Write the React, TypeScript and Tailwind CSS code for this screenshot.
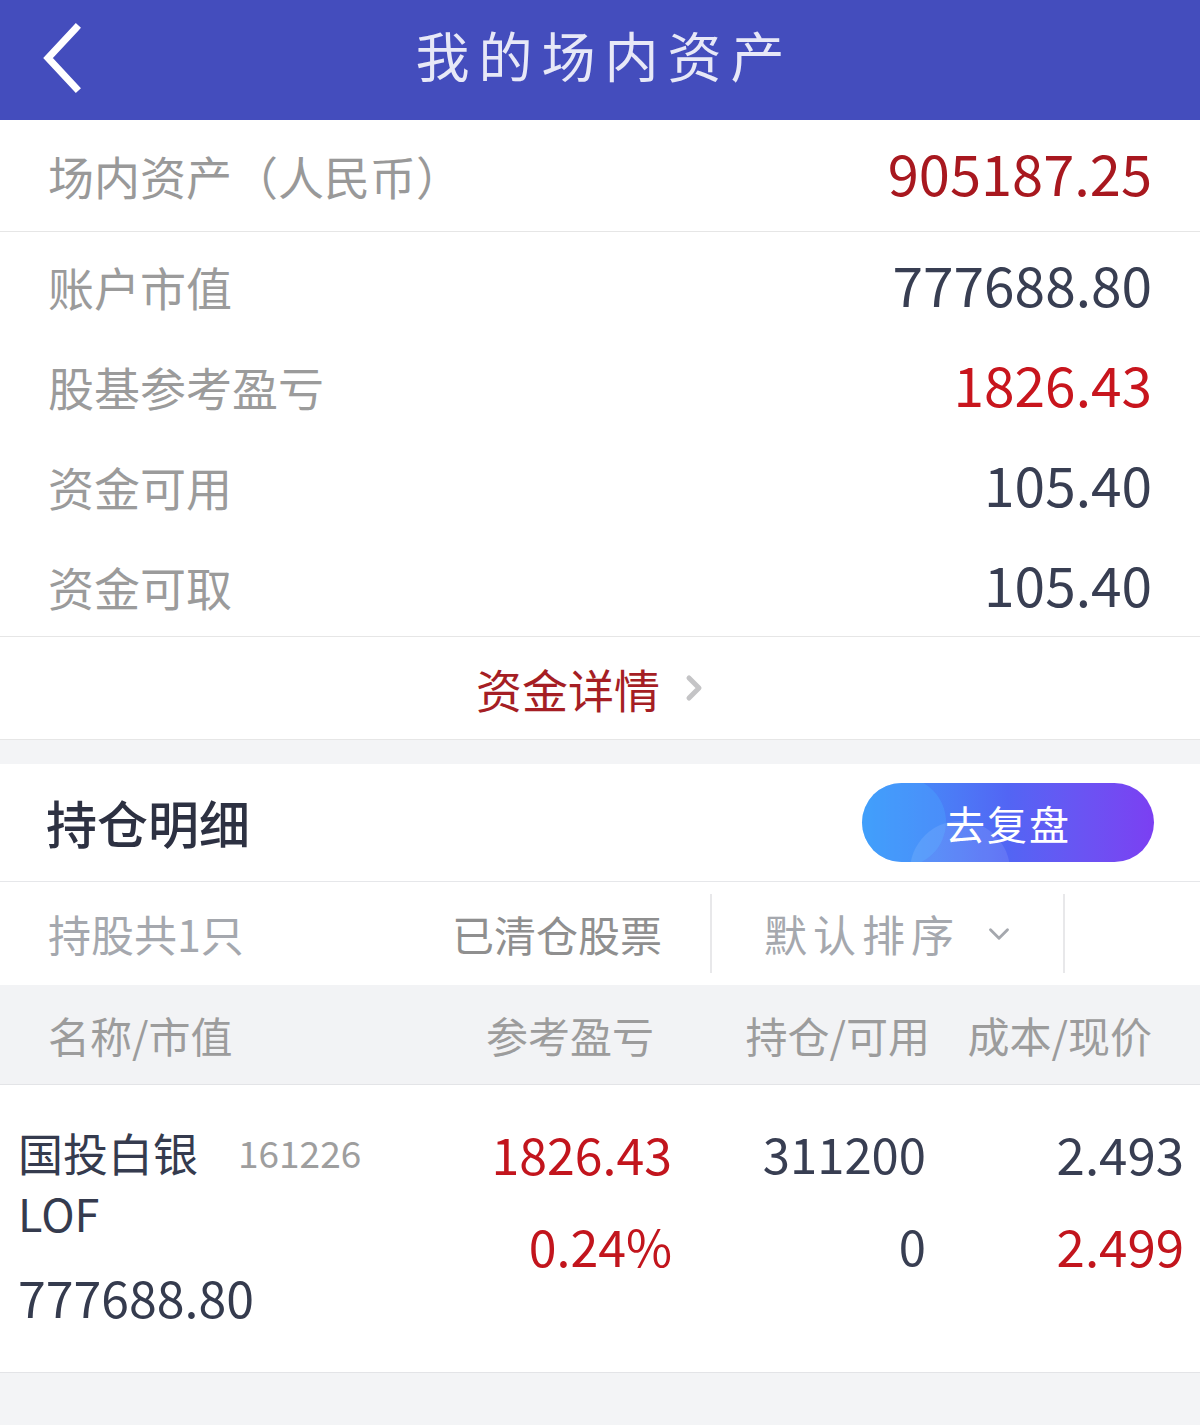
import { ChevronDown, ChevronRight } from 'lucide-react';

const font = "font-['Noto_Sans_CJK_SC','Noto_Sans',sans-serif]";

const summaryRows = [
  { label: '账户市值', value: '777688.80', red: false },
  { label: '股基参考盈亏', value: '1826.43', red: true },
  { label: '资金可用', value: '105.40', red: false },
  { label: '资金可取', value: '105.40', red: false },
];

export default function App() {
  return (
    <div className={`${font} w-[1200px] min-h-[1425px] bg-[#f3f4f6]`}>
      {/* header */}
      <div className="relative h-[120px] bg-[#444dbd] flex items-center justify-center pb-[10px]">
        <svg className="absolute left-[40px] top-[22px]" width="56" height="76" viewBox="0 0 56 76">
          <polyline points="36,6 8,36 36,66" fill="none" stroke="white" strokeWidth="7" strokeLinecap="square" />
        </svg>
        <h1 className="text-[54px] leading-none tracking-[9px] pl-[9px] text-[#e7e8f7]">我的场内资产</h1>
      </div>

      {/* assets */}
      <div className="bg-white">
        <div className="h-[112px] px-[48px] flex items-center justify-between border-b border-[#e6e6e6]">
          <span className="text-[46px] text-[#999999]">场内资产（人民币）</span>
          <span className="text-[56px] text-[#a8181f] pb-[8px]">905187.25</span>
        </div>
        <div className="pt-[4px] border-b border-[#e6e6e6]">
          {summaryRows.map((r) => (
            <div key={r.label} className="h-[100px] px-[48px] flex items-center justify-between">
              <span className="text-[46px] text-[#9b9b9b]">{r.label}</span>
              <span className={`text-[55px] pb-[6px] ${r.red ? 'text-[#c8151d]' : 'text-[#383e52]'}`}>{r.value}</span>
            </div>
          ))}
        </div>
        <div className="h-[103px] flex items-center justify-center gap-[14px] pr-[10px] border-b border-[#e6e6e6]">
          <span className="text-[46px] text-[#a51e24]">资金详情</span>
          <ChevronRight className="w-[40px] h-[40px] text-[#c4c4c6]" strokeWidth={3} />
        </div>
      </div>

      <div className="h-[24px]" />

      {/* holdings */}
      <div className="bg-white">
        <div className="h-[118px] px-[46px] flex items-center justify-between border-b border-[#e6e7ea]">
          <span className="text-[51px] font-medium text-[#2d3142]">持仓明细</span>
          <button className="relative overflow-hidden w-[292px] h-[79px] rounded-full bg-gradient-to-r from-[#3a9cf9] via-[#5265f4] to-[#7b3ff2] flex items-center justify-center">
            <span className="absolute left-[-6px] top-[-6px] w-[90px] h-[90px] rounded-full bg-[#4aa6ff]/40" />
            <span className="absolute left-[48px] top-[38px] w-[100px] h-[100px] rounded-full bg-white/10" />
            <span className="relative text-[40px] text-white tracking-[2px]">去复盘</span>
          </button>
        </div>

        <div className="h-[103px] flex items-center">
          <span className="w-[404px] pl-[48px] text-[43px] text-[#a5a8ae]">持股共1只</span>
          <span className="w-[308px] pl-[48px] text-[42px] text-[#8f8f8f] self-stretch flex items-center border-r-2 border-[#e8e8ea] my-[12px]">已清仓股票</span>
          <div className="w-[353px] self-stretch my-[12px] border-r-2 border-[#e8e8ea] flex items-center pl-[52px] gap-[22px]">
            <span className="text-[43px] tracking-[6px] text-[#a5a8ae]">默认排序</span>
            <ChevronDown className="w-[34px] h-[34px] text-[#a5a8ae]" strokeWidth={2} />
          </div>
        </div>

        <div className="h-[100px] bg-[#f2f3f5] flex items-center text-[42px] text-[#9c9c9c] border-b border-[#e3e4e7]">
          <span className="w-[400px] pl-[48px]">名称/市值</span>
          <span className="w-[254px] text-right">参考盈亏</span>
          <span className="w-[276px] text-right">持仓/可用</span>
          <span className="w-[222px] text-right">成本/现价</span>
        </div>

        <div className="h-[288px] flex pl-[18px] pt-[38px] border-b border-[#e3e4e7]">
          <div className="w-[400px] text-[#353b4e]">
            <div className="h-[60px] flex items-center gap-[40px]">
              <span className="text-[45px]">国投白银</span>
              <span className="text-[37px] text-[#9e9e9e]">161226</span>
            </div>
            <div className="h-[60px] flex items-center text-[45px]">LOF</div>
            <div className="h-[88px] flex items-end text-[50px] leading-[70px]">777688.80</div>
          </div>
          <div className="w-[254px] text-right text-[#c2151d] text-[50px]">
            <div className="h-[60px] leading-[60px]">1826.43</div>
            <div className="h-[92px] leading-[124px]">0.24%</div>
          </div>
          <div className="w-[254px] text-right text-[#383e52] text-[49px]">
            <div className="h-[60px] leading-[60px]">311200</div>
            <div className="h-[92px] leading-[124px]">0</div>
          </div>
          <div className="w-[258px] text-right text-[51px]">
            <div className="h-[60px] leading-[60px] text-[#383e52]">2.493</div>
            <div className="h-[92px] leading-[124px] text-[#c2151d]">2.499</div>
          </div>
        </div>
      </div>
    </div>
  );
}
